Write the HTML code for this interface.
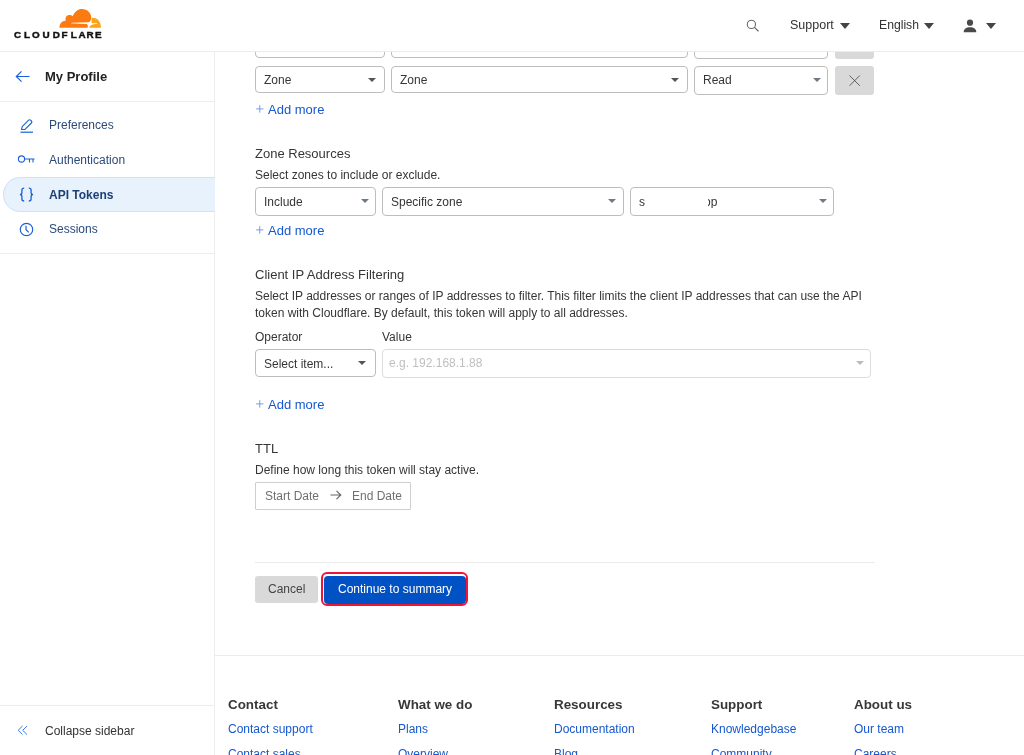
<!DOCTYPE html>
<html><head><meta charset="utf-8">
<style>
*{box-sizing:border-box;margin:0;padding:0}
html,body{width:1024px;height:755px;overflow:hidden;background:#fff}
.a{will-change:transform}
body{position:relative;font-family:"Liberation Sans",sans-serif;color:#363636}
.a{position:absolute;white-space:nowrap}
.t12{font-size:12px;line-height:12px}
.t13{font-size:13px;line-height:13px}
.b{font-weight:bold}
.blue{color:#1558cf}
.hdr{position:absolute;left:0;top:0;width:1024px;height:52px;background:#fff;border-bottom:1px solid #ececec;z-index:5}
.sb{position:absolute;left:0;top:52px;width:215px;height:703px;border-right:1px solid #eeeeee;background:#fff}
.hl{position:absolute;background:#ececec}
.sel{position:absolute;border:1px solid #bdbdbd;border-radius:4px;background:#fff}
.car{position:absolute;width:0;height:0;border-left:4px solid transparent;border-right:4px solid transparent;border-top:4.5px solid #555}
.xbtn{position:absolute;background:#d9d9d9;border-radius:3px}
</style></head>
<body>
<!-- header -->
<div class="hdr">
  <svg class="a" style="left:55px;top:6px" width="50" height="24" viewBox="0 0 1024 492">
    <path d="M90 445 C92 360 140 305 215 300 L215 265 C215 215 250 185 292 185 C322 185 345 195 362 212 C400 115 470 62 552 62 C665 62 745 150 742 245 C740 290 718 318 690 335 L350 345 L320 355 L650 368 C675 380 680 420 668 445 Z" fill="#fb7b12"/>
    <path d="M700 445 C712 405 750 372 820 368 L750 350 L750 262 C750 248 758 240 772 240 C870 240 942 320 942 445 Z" fill="#fca41c"/>
    <path d="M320 356 L850 350 L870 356 L850 362 Z" fill="#fff"/>
  </svg>
  <svg class="a" style="left:0;top:0" width="110" height="44" viewBox="0 0 110 44">
    <text x="14.10 24.00 32.10 42.50 52.80 61.40 70.70 78.50 86.60 94.90" y="38" font-family="Liberation Sans" font-weight="bold" font-size="9.9" fill="#111" stroke="#111" stroke-width="0.45">CLOUDFLARE</text>
  </svg>
  <svg class="a" style="left:746px;top:18.5px" width="14" height="14" viewBox="0 0 14 14"><circle cx="5.4" cy="5.4" r="4.1" fill="none" stroke="#6a6a6a" stroke-width="1.1"/><path d="M8.4 8.4 L12.5 12.3" stroke="#6a6a6a" stroke-width="1.3"/></svg>
  <div class="a" style="left:790px;top:19.4px;font-size:12.5px;line-height:12.5px;color:#333">Support</div>
  <div class="car" style="left:840px;top:23px;border-left-width:5.4px;border-right-width:5.4px;border-top-width:6px;border-top-color:#444"></div>
  <div class="a" style="left:879px;top:19.4px;font-size:12.2px;line-height:12.5px;color:#333">English</div>
  <div class="car" style="left:924px;top:23px;border-left-width:5.4px;border-right-width:5.4px;border-top-width:6px;border-top-color:#444"></div>
  <svg class="a" style="left:962px;top:19px" width="16" height="14" viewBox="0 0 16 14"><circle cx="8" cy="3.7" r="3.1" fill="#4a4a4a"/><path d="M1.7 13.3 C1.7 9.8 4.2 8.3 8 8.3 C11.8 8.3 14.3 9.8 14.3 13.3 Z" fill="#4a4a4a"/></svg>
  <div class="car" style="left:985.5px;top:23px;border-left-width:5.4px;border-right-width:5.4px;border-top-width:6px;border-top-color:#444"></div>
</div>

<!-- sidebar -->
<div class="sb"></div>
<div class="hl" style="left:0;top:101px;width:214px;height:1px"></div>
<div class="hl" style="left:0;top:253px;width:214px;height:1px"></div>
<div class="hl" style="left:0;top:705px;width:214px;height:1px"></div>


<!-- sidebar content -->
<svg class="a" style="left:15px;top:70px" width="16" height="13" viewBox="0 0 16 13"><path d="M1.5 6.5 H14.5 M6.5 1.3 L1.3 6.5 L6.5 11.7" fill="none" stroke="#1a60d8" stroke-width="1.2"/></svg>
<div class="a t13 b" style="left:45px;top:70px;color:#222">My Profile</div>

<svg class="a" style="left:19px;top:118px" width="16" height="16" viewBox="0 0 16 16"><path d="M2.5 11.5 L3.2 8.6 L9.6 2.2 C10.2 1.6 11 1.6 11.6 2.2 L12.4 3 C13 3.6 13 4.4 12.4 5 L6 11.4 Z" fill="none" stroke="#1a60d8" stroke-width="1.1" stroke-linejoin="round"/><path d="M1.5 14.2 H14" stroke="#1a60d8" stroke-width="1.2"/></svg>
<div class="a t12" style="left:49px;top:119px;color:#2b4a7a">Preferences</div>

<svg class="a" style="left:17px;top:154px" width="19" height="11" viewBox="0 0 19 11"><circle cx="4.5" cy="5" r="3.1" fill="none" stroke="#1a60d8" stroke-width="1.1"/><path d="M7.6 5 H17.5 M12.5 5 V8.5 M16 5 V8.5" fill="none" stroke="#1a60d8" stroke-width="1.1"/></svg>
<div class="a t12" style="left:49px;top:154px;color:#2b4a7a">Authentication</div>

<div class="a" style="left:3px;top:177px;width:212px;height:35px;background:#e8f2fd;border:1px solid #cfe2f8;border-right:none;border-radius:17.5px 0 0 17.5px"></div>
<svg class="a" style="left:14px;top:180px" width="26" height="28" viewBox="14 180 26 28"><path d="M24.2 188.2 C22.6 188.2 21.9 188.8 21.9 190.3 V192.8 C21.9 194 21.2 194.6 19.9 194.6 C21.2 194.6 21.9 195.2 21.9 196.4 V198.9 C21.9 200.4 22.6 201 24.2 201 M28.8 188.2 C30.4 188.2 31.1 188.8 31.1 190.3 V192.8 C31.1 194 31.8 194.6 33.1 194.6 C31.8 194.6 31.1 195.2 31.1 196.4 V198.9 C31.1 200.4 30.4 201 28.8 201" fill="none" stroke="#1a60d8" stroke-width="1.3"/></svg>
<div class="a t12 b" style="left:49px;top:189px;color:#1c3f78">API Tokens</div>

<svg class="a" style="left:19px;top:222px" width="15" height="15" viewBox="0 0 15 15"><circle cx="7.5" cy="7.5" r="6.2" fill="none" stroke="#1a60d8" stroke-width="1.2"/><path d="M7 3.8 V7.8 L9.8 10.4" fill="none" stroke="#1a60d8" stroke-width="1.2"/></svg>
<div class="a t12" style="left:49px;top:223px;color:#2b4a7a">Sessions</div>

<svg class="a" style="left:17px;top:725px" width="11" height="11" viewBox="0 0 11 11"><path d="M5.5 1 L1.2 5.3 L5.5 9.6 M10 1 L5.7 5.3 L10 9.6" fill="none" stroke="#3b7ae0" stroke-width="1"/></svg>
<div class="a t12" style="left:45px;top:725px;color:#333">Collapse sidebar</div>

<!-- main: first rows -->
<div class="sel" style="left:255px;top:30px;width:130px;height:28px"></div>
<div class="sel" style="left:391px;top:30px;width:297px;height:28px"></div>
<div class="sel" style="left:694px;top:30px;width:134px;height:29px"></div>
<div class="xbtn" style="left:835px;top:30px;width:39px;height:29px"></div>

<div class="sel" style="left:255px;top:66px;width:130px;height:27px"></div>
<div class="a t12" style="left:264px;top:74px">Zone</div>
<div class="car" style="left:368px;top:78px"></div>
<div class="sel" style="left:391px;top:66px;width:297px;height:27px"></div>
<div class="a t12" style="left:400px;top:74px">Zone</div>
<div class="car" style="left:671px;top:78px"></div>
<div class="sel" style="left:694px;top:66px;width:134px;height:28.5px"></div>
<div class="a t12" style="left:703px;top:74px">Read</div>
<div class="car" style="left:813px;top:78px;border-top-color:#6d7a86"></div>
<div class="xbtn" style="left:835px;top:66px;width:39px;height:28.5px"></div>
<svg class="a" style="left:848px;top:74px" width="13" height="13" viewBox="0 0 13 13"><path d="M1.5 1.5 L11.8 11.8 M11.8 1.5 L1.5 11.8" stroke="#555" stroke-width="0.9"/></svg>

<svg class="a plus" style="left:256px;top:105.0px" width="8" height="8" viewBox="0 0 8 8"><path d="M3.75 0.2 V7.6 M0.2 3.9 H7.4" stroke="#6f9fe8" stroke-width="1"/></svg>
<div class="a t13 blue" style="left:268px;top:103px">Add more</div>

<!-- zone resources -->
<div class="a t13" style="left:255px;top:147px">Zone Resources</div>
<div class="a t12" style="left:255px;top:169px">Select zones to include or exclude.</div>
<div class="sel" style="left:255px;top:187px;width:121px;height:29px"></div>
<div class="a t12" style="left:264px;top:196px">Include</div>
<div class="car" style="left:361px;top:199px;border-top-color:#6d7a86"></div>
<div class="sel" style="left:382px;top:187px;width:242px;height:29px"></div>
<div class="a t12" style="left:391px;top:196px">Specific zone</div>
<div class="car" style="left:608px;top:199px;border-top-color:#6d7a86"></div>
<div class="sel" style="left:630px;top:187px;width:204px;height:29px"></div>
<div class="a t12" style="left:639px;top:196px">s</div>
<div class="a t12" style="left:708px;top:196px;width:15px;overflow:hidden"><span style="margin-left:-4px">op</span></div>
<div class="car" style="left:819px;top:199px;border-top-color:#6d7a86"></div>

<svg class="a plus" style="left:256px;top:226.0px" width="8" height="8" viewBox="0 0 8 8"><path d="M3.75 0.2 V7.6 M0.2 3.9 H7.4" stroke="#6f9fe8" stroke-width="1"/></svg>
<div class="a t13 blue" style="left:268px;top:224px">Add more</div>

<!-- client ip -->
<div class="a t13" style="left:255px;top:268px">Client IP Address Filtering</div>
<div class="a t12" style="left:255px;top:290px">Select IP addresses or ranges of IP addresses to filter. This filter limits the client IP addresses that can use the API</div>
<div class="a t12" style="left:255px;top:307px">token with Cloudflare. By default, this token will apply to all addresses.</div>
<div class="a t12" style="left:255px;top:331px">Operator</div>
<div class="a t12" style="left:382px;top:331px">Value</div>
<div class="sel" style="left:255px;top:349px;width:121px;height:28px"></div>
<div class="a t12" style="left:264px;top:358px">Select item...</div>
<div class="car" style="left:358px;top:361px"></div>
<div class="sel" style="left:382px;top:349px;width:489px;height:29px;border-color:#dcdcdc"></div>
<div class="a t12" style="left:389px;top:357px;color:#bfbfbf">e.g. 192.168.1.88</div>
<div class="car" style="left:856px;top:361px;border-top-color:#b5bcc4"></div>

<svg class="a plus" style="left:256px;top:400.0px" width="8" height="8" viewBox="0 0 8 8"><path d="M3.75 0.2 V7.6 M0.2 3.9 H7.4" stroke="#6f9fe8" stroke-width="1"/></svg>
<div class="a t13 blue" style="left:268px;top:398px">Add more</div>

<!-- ttl -->
<div class="a t13" style="left:255px;top:442px">TTL</div>
<div class="a t12" style="left:255px;top:464px">Define how long this token will stay active.</div>
<div class="a" style="left:255px;top:482px;width:156px;height:28px;border:1px solid #cfcfcf;border-radius:1px"></div>
<div class="a t12" style="left:265px;top:490px;color:#707070">Start Date</div>
<svg class="a" style="left:330px;top:490px" width="12" height="10" viewBox="0 0 12 10"><path d="M0.5 5 H11 M6.5 0.8 L10.8 5 L6.5 9.2" fill="none" stroke="#666" stroke-width="1.1"/></svg>
<div class="a t12" style="left:352px;top:490px;color:#707070">End Date</div>

<!-- divider + buttons -->
<div class="hl" style="left:255px;top:562px;width:620px;height:1px;background:#ebebeb"></div>
<div class="a" style="left:255px;top:576px;width:63px;height:27px;background:#d9d9d9;border-radius:3px"></div>
<div class="a t12" style="left:268px;top:583px;color:#444">Cancel</div>
<div class="a" style="left:321px;top:572px;width:147px;height:34px;border:2px solid #ee1539;border-radius:6px"></div>
<div class="a" style="left:324px;top:575.5px;width:142px;height:27.5px;background:#0051c3;border-radius:4px"></div>
<div class="a t12" style="left:338px;top:583px;color:#fff">Continue to summary</div>

<!-- footer -->
<div class="hl" style="left:215px;top:655px;width:809px;height:1px;background:#ebebeb"></div>
<div class="a b" style="left:228px;top:697.5px;font-size:13.4px;line-height:13.4px;color:#383838">Contact</div>
<div class="a t12 blue" style="left:228px;top:723px">Contact support</div>
<div class="a t12 blue" style="left:228px;top:748px">Contact sales</div>
<div class="a b" style="left:398px;top:697.5px;font-size:13.4px;line-height:13.4px;color:#383838">What we do</div>
<div class="a t12 blue" style="left:398px;top:723px">Plans</div>
<div class="a t12 blue" style="left:398px;top:748px">Overview</div>
<div class="a b" style="left:554px;top:697.5px;font-size:13.4px;line-height:13.4px;color:#383838">Resources</div>
<div class="a t12 blue" style="left:554px;top:723px">Documentation</div>
<div class="a t12 blue" style="left:554px;top:748px">Blog</div>
<div class="a b" style="left:711px;top:697.5px;font-size:13.4px;line-height:13.4px;color:#383838">Support</div>
<div class="a t12 blue" style="left:711px;top:723px">Knowledgebase</div>
<div class="a t12 blue" style="left:711px;top:748px">Community</div>
<div class="a b" style="left:854px;top:697.5px;font-size:13.4px;line-height:13.4px;color:#383838">About us</div>
<div class="a t12 blue" style="left:854px;top:723px">Our team</div>
<div class="a t12 blue" style="left:854px;top:748px">Careers</div>
</body></html>
